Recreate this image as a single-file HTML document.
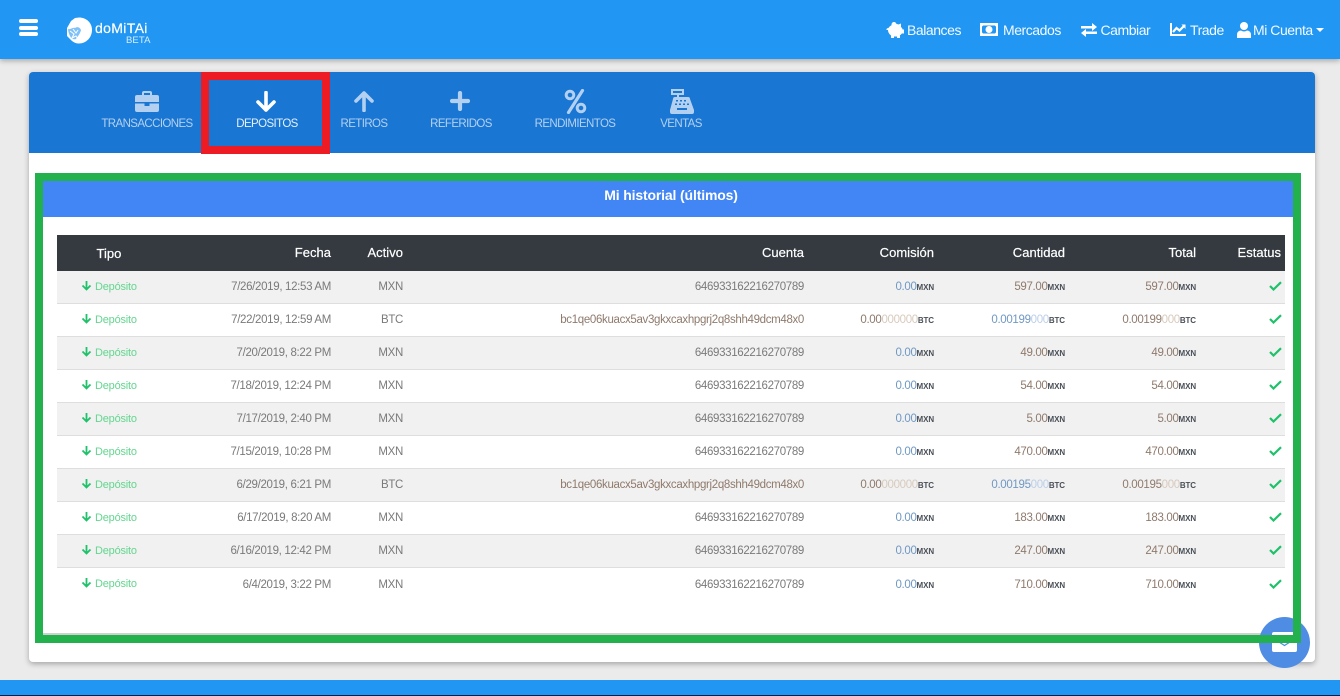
<!DOCTYPE html>
<html lang="es"><head><meta charset="utf-8"><title>Domitai</title>
<style>
*{box-sizing:border-box}
html,body{margin:0;padding:0;width:1340px;height:696px;overflow:hidden;background:#ebebeb;font-family:"Liberation Sans",sans-serif}
.a{position:absolute}
#nav{left:0;top:0;width:1340px;height:59px;background:#2196f3;box-shadow:0 2px 5px rgba(0,0,0,.28)}
.bar{left:19px;width:19px;height:4px;background:#fff;border-radius:2px}
.nt{color:#fff;font-size:14px;top:22px;line-height:16px;white-space:nowrap;letter-spacing:-.45px;opacity:.95}
#card{left:29px;top:72px;width:1286px;height:590px;background:#fff;border-radius:4px;box-shadow:0 2px 6px rgba(0,0,0,.3)}
#tabs{left:29px;top:72px;width:1286px;height:81px;background:#1976d2;border-radius:4px 4px 0 0}
.tt{top:117px;font-size:11.5px;line-height:14px;color:#b4d0f1;width:140px;text-align:center;letter-spacing:-.6px}
#red{left:201px;top:72px;width:129px;height:82px;border:8px solid #ed1c24}
#green{left:35px;top:173px;width:1266px;height:470px;border:8px solid #22b14c;z-index:5}
#ph{left:43px;top:181px;width:1250px;height:36px;background:#4285f4;color:#fff;font-size:14px;font-weight:bold;line-height:29px;text-align:center;padding-left:6px;letter-spacing:-.15px}
#pb{left:43px;top:633px;width:1250px;height:2px;background:#d0d0d0}
table{position:absolute;left:57px;top:235px;width:1228px;border-collapse:separate;border-spacing:0;table-layout:fixed}
th{height:36px;background:#343a40;color:#fff;font-size:13px;font-weight:normal;text-align:right;padding:0 8px 2px 0;letter-spacing:.02px;-webkit-text-stroke:.2px #fff}
td{height:33px;border-bottom:1px solid #dedede;text-align:right;padding:0 8px 0 0;font-size:11.5px;color:#7a7a7a;white-space:nowrap;letter-spacing:-.33px}
tr:nth-child(odd) td{background:#f1f1f1}
tbody tr:last-child td{border-bottom:0}
th:first-child,td:first-child{text-align:center;padding:0}
td:first-child{color:#63d68f;font-size:11px;letter-spacing:-.2px;padding-bottom:2px}
th:last-child{padding-right:4px}
td:last-child{padding-right:3px}
td svg{vertical-align:-1px}
b{font-weight:bold;font-size:8px;color:#4a5058;letter-spacing:-.1px}
i{font-style:normal}
.bl{color:#7098c4}.lb{color:#bccfe9}.br{color:#8f7a6c}.ln{color:#d8cabd}
#chat{left:1259px;top:617px;width:51px;height:51px;border-radius:50%;background:#4f8ce3}
#foot{left:0;top:680px;width:1340px;height:15px;background:#2196f3}
#blk{left:0;top:695px;width:1340px;height:1px;background:#0b1e50}
</style></head><body>
<div class="a" id="nav"></div>
<div class="a bar" style="top:19px"></div><div class="a bar" style="top:26px"></div><div class="a bar" style="top:32px"></div>

<svg class="a" style="left:65px;top:16px" width="30" height="30" viewBox="0 0 30 30"><path d="M14 1.500C21 1.500 27 6.500 27 14c0 7.500-6 13.500-13 13.500-3 0-5-1-7-2.500L2 20V12l4-7 4-3z" fill="#fff"/><path d="M3 13c2 1 5-2 7-1 3-2 5 0 6 2-1 4-3 6-5 9-3 1-5-1-6-3-1-2-2-5-2-7z" fill="#7fc1f8"/><path d="M5 15l4 3-2 4 4-2 2 3M8 13l3 4 2-3" fill="none" stroke="#fff" stroke-width="1"/></svg>
<div class="a" style="left:95px;top:20px;font-size:14px;line-height:16px;color:#fff;letter-spacing:.35px;white-space:nowrap;-webkit-text-stroke:.2px #fff">doMiTAi</div>
<div class="a" style="left:126px;top:36px;font-size:9.500px;line-height:9px;color:#d9eefe;letter-spacing:.1px">BETA</div>

<svg class="a" style="left:886px;top:22px" width="18" height="16" viewBox="0 0 18 16"><path d="M6 3c1-.6 2.500-1 4-1 1 0 1.800.200 2.500.500L15 1.500V5c1 .8 1.300 1.500 1.600 2.500H18v4h-2.200c-.5.800-1 1.300-1.800 1.800V16h-3v-1.500H8V16H5v-2.500C3 12 2 10 2 8H.5C.2 7 1 6 2.500 6 3 5 4 4 6 3z" fill="#fff"/><circle cx="8" cy="2.500" r="2.500" fill="#fff"/></svg>
<div class="a nt" style="left:907px">Balances</div>
<svg class="a" style="left:980px;top:23px" width="18" height="14" viewBox="0 0 18 14"><path fill-rule="evenodd" d="M0 0h18v13H0zM3 2.500a2 2 0 0 1-1 1v6a2 2 0 0 1 1 1h12a2 2 0 0 1 1-1v-6a2 2 0 0 1-1-1z" fill="#fff"/><circle cx="9" cy="6.500" r="3.500" fill="#fff"/></svg>
<div class="a nt" style="left:1003px">Mercados</div>
<svg class="a" style="left:1081px;top:23px" width="16" height="14" viewBox="0 0 16 14"><path d="M0 3h11V0l5 4-5 4V5.500H0zM16 8.500H5V6L0 10l5 4v-3h11z" fill="#fff"/></svg>
<div class="a nt" style="left:1100.500px">Cambiar</div>
<svg class="a" style="left:1170px;top:23px" width="16" height="13" viewBox="0 0 16 13"><path d="M0 0h2v11h14v2H0z" fill="#fff"/><path d="M3 9l3.500-4 3 2.500L14 3" fill="none" stroke="#fff" stroke-width="2.200"/><path d="M11.500 1.500H15.500V6z" fill="#fff"/></svg>
<div class="a nt" style="left:1190px">Trade</div>
<svg class="a" style="left:1237px;top:22px" width="14" height="16" viewBox="0 0 14 16"><circle cx="7" cy="4" r="4" fill="#fff"/><path d="M0 16v-3.500C0 10 2 8.500 4 8.500c2 1.300 4 1.300 6 0 2 0 4 1.500 4 4V16z" fill="#fff"/></svg>
<div class="a nt" style="left:1253px">Mi Cuenta</div>
<svg class="a" style="left:1316px;top:28px" width="8" height="4" viewBox="0 0 8 4"><path d="M0 0h8L4 4z" fill="#fff"/></svg>

<div class="a" id="card"></div>
<div class="a" id="tabs"></div>

<svg class="a" style="left:135px;top:91px" width="24" height="21" viewBox="0 0 24 21"><path fill-rule="evenodd" d="M7 4V2a2 2 0 0 1 2-2h6a2 2 0 0 1 2 2v2h5a2 2 0 0 1 2 2v5H0V6a2 2 0 0 1 2-2zM9 2v2h6V2z" fill="#b4d0f1"/><path d="M0 12.500h9.500V15h5v-2.500H24V19a2 2 0 0 1-2 2H2a2 2 0 0 1-2-2z" fill="#b4d0f1"/></svg>
<div class="a tt" style="left:77px">TRANSACCIONES</div>

<svg class="a" style="left:256px;top:91px" width="20" height="21" viewBox="0 0 20 21"><path d="M10 1.500V19M2 11l8 8 8-8" fill="none" stroke="#fff" stroke-width="3.600" stroke-linecap="round" stroke-linejoin="round"/></svg>
<div class="a tt" style="left:197px;color:#e6f0fb">DEPOSITOS</div>

<svg class="a" style="left:354px;top:91px" width="20" height="21" viewBox="0 0 20 21"><path d="M10 19.500V2M2 10l8-8 8 8" fill="none" stroke="#b4d0f1" stroke-width="3.600" stroke-linecap="round" stroke-linejoin="round"/></svg>
<div class="a tt" style="left:294px">RETIROS</div>

<svg class="a" style="left:450px;top:91px" width="20" height="20" viewBox="0 0 20 20"><path d="M10 2v16M2 10h16" fill="none" stroke="#b4d0f1" stroke-width="4.200" stroke-linecap="round"/></svg>
<div class="a tt" style="left:391px">REFERIDOS</div>

<svg class="a" style="left:564px;top:89px" width="23" height="25" viewBox="0 0 23 25"><circle cx="6" cy="6" r="3.800" fill="none" stroke="#b4d0f1" stroke-width="3"/><circle cx="17" cy="19" r="3.800" fill="none" stroke="#b4d0f1" stroke-width="3"/><path d="M18.500 1.500L4.500 23.500" stroke="#b4d0f1" stroke-width="3.200" stroke-linecap="round"/></svg>
<div class="a tt" style="left:505px">RENDIMIENTOS</div>

<svg class="a" style="left:670px;top:89px" width="24" height="25" viewBox="0 0 24 25"><path fill-rule="evenodd" d="M1 0h13v6H9v2h9a2 2 0 0 1 2 2l4 11v2a2 2 0 0 1-2 2H2a2 2 0 0 1-2-2v-2L3 10a2 2 0 0 1 2-2h2V6H1zM3 2v2h9V2zM7 19v2h10v-2z" fill="#b4d0f1"/><g fill="#1976d2"><rect x="6" y="11" width="2" height="1.500"/><rect x="10" y="11" width="2" height="1.500"/><rect x="14" y="11" width="2" height="1.500"/><rect x="5" y="14.500" width="2" height="1.500"/><rect x="9" y="14.500" width="2" height="1.500"/><rect x="13" y="14.500" width="2" height="1.500"/><rect x="17" y="14.500" width="2" height="1.500"/></g></svg>
<div class="a tt" style="left:611px">VENTAS</div>

<div class="a" id="ph">Mi historial (últimos)</div>
<div class="a" id="pb"></div>

<table>
<colgroup><col style="width:104px"><col style="width:178px"><col style="width:72px"><col style="width:401px"><col style="width:130px"><col style="width:131px"><col style="width:131px"><col style="width:81px"></colgroup>
<thead><tr><th>Tipo</th><th>Fecha</th><th>Activo</th><th>Cuenta</th><th>Comisión</th><th>Cantidad</th><th>Total</th><th>Estatus</th></tr></thead>
<tbody>
<tr><td><svg width="11" height="11" viewBox="0 0 11 11"><path d="M5.500 1v8.500M1.500 5.500l4 4 4-4" fill="none" stroke="#1fc16b" stroke-width="1.800"/></svg> Depósito</td><td>7/26/2019, 12:53 AM</td><td>MXN</td><td>646933162216270789</td><td><i class="bl">0.00</i><b>MXN</b></td><td><i class="br">597.00</i><b>MXN</b></td><td><i class="br">597.00</i><b>MXN</b></td><td><svg width="13" height="10" viewBox="0 0 13 10"><path d="M1 5l3.500 3.500L12 1.200" fill="none" stroke="#1fc16b" stroke-width="2.200"/></svg></td></tr>
<tr><td><svg width="11" height="11" viewBox="0 0 11 11"><path d="M5.500 1v8.500M1.500 5.500l4 4 4-4" fill="none" stroke="#1fc16b" stroke-width="1.800"/></svg> Depósito</td><td>7/22/2019, 12:59 AM</td><td>BTC</td><td><i class="br">bc1qe06kuacx5av3gkxcaxhpgrj2q8shh49dcm48x0</i></td><td><i class="br">0.00</i><i class="ln">000000</i><b>BTC</b></td><td><i class="bl">0.00199</i><i class="lb">000</i><b>BTC</b></td><td><i class="br">0.00199</i><i class="ln">000</i><b>BTC</b></td><td><svg width="13" height="10" viewBox="0 0 13 10"><path d="M1 5l3.500 3.500L12 1.200" fill="none" stroke="#1fc16b" stroke-width="2.200"/></svg></td></tr>
<tr><td><svg width="11" height="11" viewBox="0 0 11 11"><path d="M5.500 1v8.500M1.500 5.500l4 4 4-4" fill="none" stroke="#1fc16b" stroke-width="1.800"/></svg> Depósito</td><td>7/20/2019, 8:22 PM</td><td>MXN</td><td>646933162216270789</td><td><i class="bl">0.00</i><b>MXN</b></td><td><i class="br">49.00</i><b>MXN</b></td><td><i class="br">49.00</i><b>MXN</b></td><td><svg width="13" height="10" viewBox="0 0 13 10"><path d="M1 5l3.500 3.500L12 1.200" fill="none" stroke="#1fc16b" stroke-width="2.200"/></svg></td></tr>
<tr><td><svg width="11" height="11" viewBox="0 0 11 11"><path d="M5.500 1v8.500M1.500 5.500l4 4 4-4" fill="none" stroke="#1fc16b" stroke-width="1.800"/></svg> Depósito</td><td>7/18/2019, 12:24 PM</td><td>MXN</td><td>646933162216270789</td><td><i class="bl">0.00</i><b>MXN</b></td><td><i class="br">54.00</i><b>MXN</b></td><td><i class="br">54.00</i><b>MXN</b></td><td><svg width="13" height="10" viewBox="0 0 13 10"><path d="M1 5l3.500 3.500L12 1.200" fill="none" stroke="#1fc16b" stroke-width="2.200"/></svg></td></tr>
<tr><td><svg width="11" height="11" viewBox="0 0 11 11"><path d="M5.500 1v8.500M1.500 5.500l4 4 4-4" fill="none" stroke="#1fc16b" stroke-width="1.800"/></svg> Depósito</td><td>7/17/2019, 2:40 PM</td><td>MXN</td><td>646933162216270789</td><td><i class="bl">0.00</i><b>MXN</b></td><td><i class="br">5.00</i><b>MXN</b></td><td><i class="br">5.00</i><b>MXN</b></td><td><svg width="13" height="10" viewBox="0 0 13 10"><path d="M1 5l3.500 3.500L12 1.200" fill="none" stroke="#1fc16b" stroke-width="2.200"/></svg></td></tr>
<tr><td><svg width="11" height="11" viewBox="0 0 11 11"><path d="M5.500 1v8.500M1.500 5.500l4 4 4-4" fill="none" stroke="#1fc16b" stroke-width="1.800"/></svg> Depósito</td><td>7/15/2019, 10:28 PM</td><td>MXN</td><td>646933162216270789</td><td><i class="bl">0.00</i><b>MXN</b></td><td><i class="br">470.00</i><b>MXN</b></td><td><i class="br">470.00</i><b>MXN</b></td><td><svg width="13" height="10" viewBox="0 0 13 10"><path d="M1 5l3.500 3.500L12 1.200" fill="none" stroke="#1fc16b" stroke-width="2.200"/></svg></td></tr>
<tr><td><svg width="11" height="11" viewBox="0 0 11 11"><path d="M5.500 1v8.500M1.500 5.500l4 4 4-4" fill="none" stroke="#1fc16b" stroke-width="1.800"/></svg> Depósito</td><td>6/29/2019, 6:21 PM</td><td>BTC</td><td><i class="br">bc1qe06kuacx5av3gkxcaxhpgrj2q8shh49dcm48x0</i></td><td><i class="br">0.00</i><i class="ln">000000</i><b>BTC</b></td><td><i class="bl">0.00195</i><i class="lb">000</i><b>BTC</b></td><td><i class="br">0.00195</i><i class="ln">000</i><b>BTC</b></td><td><svg width="13" height="10" viewBox="0 0 13 10"><path d="M1 5l3.500 3.500L12 1.200" fill="none" stroke="#1fc16b" stroke-width="2.200"/></svg></td></tr>
<tr><td><svg width="11" height="11" viewBox="0 0 11 11"><path d="M5.500 1v8.500M1.500 5.500l4 4 4-4" fill="none" stroke="#1fc16b" stroke-width="1.800"/></svg> Depósito</td><td>6/17/2019, 8:20 AM</td><td>MXN</td><td>646933162216270789</td><td><i class="bl">0.00</i><b>MXN</b></td><td><i class="br">183.00</i><b>MXN</b></td><td><i class="br">183.00</i><b>MXN</b></td><td><svg width="13" height="10" viewBox="0 0 13 10"><path d="M1 5l3.500 3.500L12 1.200" fill="none" stroke="#1fc16b" stroke-width="2.200"/></svg></td></tr>
<tr><td><svg width="11" height="11" viewBox="0 0 11 11"><path d="M5.500 1v8.500M1.500 5.500l4 4 4-4" fill="none" stroke="#1fc16b" stroke-width="1.800"/></svg> Depósito</td><td>6/16/2019, 12:42 PM</td><td>MXN</td><td>646933162216270789</td><td><i class="bl">0.00</i><b>MXN</b></td><td><i class="br">247.00</i><b>MXN</b></td><td><i class="br">247.00</i><b>MXN</b></td><td><svg width="13" height="10" viewBox="0 0 13 10"><path d="M1 5l3.500 3.500L12 1.200" fill="none" stroke="#1fc16b" stroke-width="2.200"/></svg></td></tr>
<tr><td><svg width="11" height="11" viewBox="0 0 11 11"><path d="M5.500 1v8.500M1.500 5.500l4 4 4-4" fill="none" stroke="#1fc16b" stroke-width="1.800"/></svg> Depósito</td><td>6/4/2019, 3:22 PM</td><td>MXN</td><td>646933162216270789</td><td><i class="bl">0.00</i><b>MXN</b></td><td><i class="br">710.00</i><b>MXN</b></td><td><i class="br">710.00</i><b>MXN</b></td><td><svg width="13" height="10" viewBox="0 0 13 10"><path d="M1 5l3.500 3.500L12 1.200" fill="none" stroke="#1fc16b" stroke-width="2.200"/></svg></td></tr>
</tbody></table>

<div class="a" id="chat"></div>
<svg class="a" style="left:1272px;top:632px" width="25" height="20" viewBox="0 0 25 20"><rect width="25" height="20" rx="2" fill="#fff"/><path d="M7 10l5.500 3.500L18 10" fill="none" stroke="#4f8ce3" stroke-width="1.200"/></svg>
<div class="a" id="red"></div>
<div class="a" id="green"></div>
<div class="a" id="foot"></div>
<div class="a" id="blk"></div>
</body></html>
